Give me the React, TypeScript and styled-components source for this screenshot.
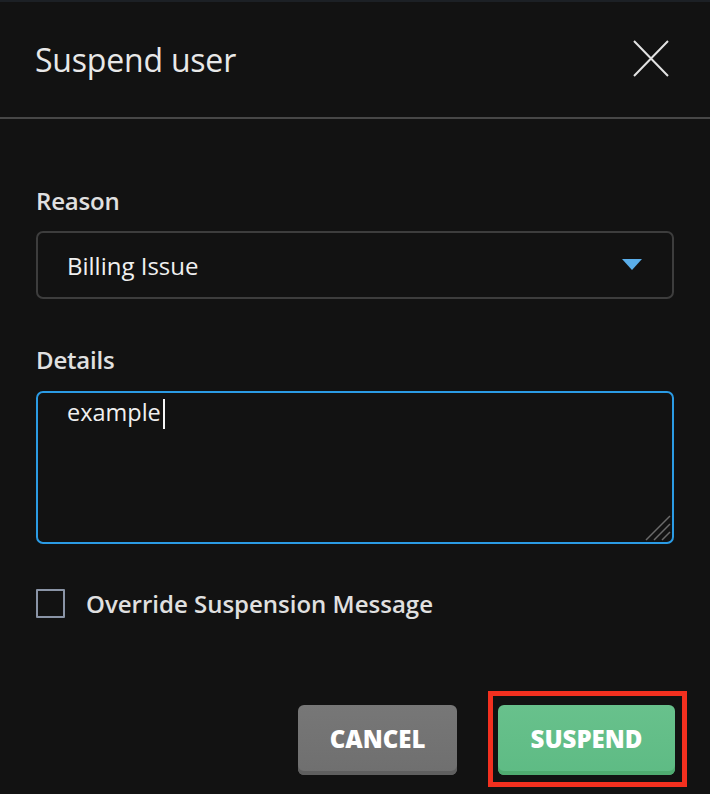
import React from "react";
import styled, { createGlobalStyle } from "styled-components";

const Global = createGlobalStyle`
  html, body { margin: 0; padding: 0; background: #121212; }
  body { font-family: "Open Sans", "Noto Sans", sans-serif; color: #e6e6e6; }
  * { box-sizing: border-box; }
`;

const Dialog = styled.div`
  width: 710px;
  height: 794px;
  background: #121212;
  border-top: 2px solid #1c2025;
  display: flex;
  flex-direction: column;
`;

const Header = styled.header`
  height: 117px;
  padding: 0 40px 0 35px;
  display: flex;
  align-items: center;
  justify-content: space-between;
  border-bottom: 2px solid #474747;
`;

const Title = styled.h1`
  margin: 0;
  font-size: 32px;
  font-weight: 400;
  color: #e8e8e8;
  letter-spacing: -0.2px;
`;

const CloseButton = styled.button`
  width: 38px;
  height: 38px;
  padding: 0;
  border: 0;
  background: transparent;
  display: flex;
  align-items: center;
  justify-content: center;
  margin-top: -2px;
`;

const Body = styled.div`
  padding: 67px 36px 0 36px;
  display: flex;
  flex-direction: column;
`;

const Field = styled.div<{ $mb: number; $gap: number }>`
  display: flex;
  flex-direction: column;
  gap: ${(p) => p.$gap}px;
  margin-bottom: ${(p) => p.$mb}px;
`;

const Label = styled.label`
  font-size: 24px;
  font-weight: 600;
  line-height: 30px;
  color: #e0e0e0;
  letter-spacing: -0.2px;
`;

const Select = styled.div`
  height: 68px;
  border: 2px solid #3d3d3d;
  border-radius: 7px;
  padding: 0 30px 0 29px;
  display: flex;
  align-items: center;
  justify-content: space-between;
  font-size: 24px;
  color: #f0f0f0;
`;

const TextArea = styled.div`
  position: relative;
  height: 153px;
  border: 2px solid #2b9be4;
  border-radius: 7px;
  padding: 2px 29px;
  font-size: 23.5px;
  line-height: 34px;
  color: #f0f0f0;
`;

const Caret = styled.span`
  display: inline-block;
  width: 2px;
  height: 30px;
  background: #f5f5f5;
  vertical-align: -8px;
  margin-left: 2px;
`;

const Grip = styled.svg`
  position: absolute;
  right: 1px;
  bottom: 1px;
`;

const CheckRow = styled.div`
  display: flex;
  align-items: center;
  gap: 21px;
  margin-top: 43px;
`;

const Checkbox = styled.span`
  width: 29px;
  height: 29px;
  border: 2px solid #8a94a6;
  border-radius: 1px;
`;

const CheckLabel = styled.span`
  font-size: 24px;
  font-weight: 600;
  color: #e0e0e0;
`;

const Footer = styled.div`
  margin-top: 85px;
  display: flex;
  justify-content: flex-end;
  gap: 41px;
  padding-right: 35px;
`;

const Button = styled.button<{ $variant: "cancel" | "primary"; $w: number }>`
  position: relative;
  width: ${(p) => p.$w}px;
  height: 70px;
  border: 0;
  border-radius: 6px;
  font-family: "Open Sans", "Noto Sans", sans-serif;
  font-size: 24px;
  font-weight: 800;
  letter-spacing: 0;
  color: #ffffff;
  padding: 0 0 3px 0;
  background: ${(p) =>
    p.$variant === "primary"
      ? "linear-gradient(#68c18c, #5ebb84)"
      : "linear-gradient(#777777, #6f6f6f)"};
  box-shadow: inset 0 -4px 0
    ${(p) => (p.$variant === "primary" ? "#4fab70" : "#5f5f5f")};
`;

const Highlight = styled.span`
  position: absolute;
  top: -14px;
  left: -10px;
  right: -12px;
  bottom: -12px;
  border: 5px solid #f3301f;
  pointer-events: none;
`;

export default function App() {
  return (
    <>
      <Global />
      <Dialog>
        <Header>
          <Title>Suspend user</Title>
          <CloseButton aria-label="Close">
            <svg width="36" height="37" viewBox="0 0 36 37">
              <path d="M1 1 L35 36 M35 1 L1 36" stroke="#e2e2e2" strokeWidth="2" fill="none" />
            </svg>
          </CloseButton>
        </Header>
        <Body>
          <Field $mb={46} $gap={15}>
            <Label>Reason</Label>
            <Select>
              <span>Billing Issue</span>
              <svg width="20" height="12" viewBox="0 0 20 12">
                <path d="M0 0 H20 L10 11 Z" fill="#5aaeea" />
              </svg>
            </Select>
          </Field>
          <Field $mb={0} $gap={16}>
            <Label>Details</Label>
            <TextArea>
              example<Caret />
              <Grip width="26" height="26" viewBox="0 0 26 26">
                <path d="M1 25 L25 1 M9 25 L25 9 M17 25 L25 17" stroke="#6a6a6a" strokeWidth="1.5" />
              </Grip>
            </TextArea>
          </Field>
          <CheckRow>
            <Checkbox />
            <CheckLabel>Override Suspension Message</CheckLabel>
          </CheckRow>
        </Body>
        <Footer>
          <Button $variant="cancel" $w={159}>CANCEL</Button>
          <Button $variant="primary" $w={177}>
            SUSPEND
            <Highlight />
          </Button>
        </Footer>
      </Dialog>
    </>
  );
}
